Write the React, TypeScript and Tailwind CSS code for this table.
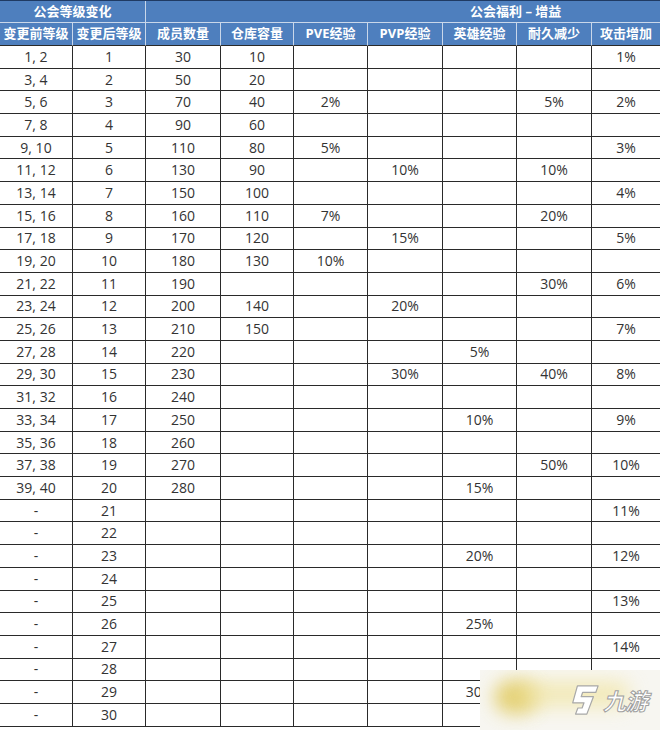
const rows: string[][] = [
  ["1, 2", "1", "30", "10", "", "", "", "", "1%"],
  ["3, 4", "2", "50", "20", "", "", "", "", ""],
  ["5, 6", "3", "70", "40", "2%", "", "", "5%", "2%"],
  ["7, 8", "4", "90", "60", "", "", "", "", ""],
  ["9, 10", "5", "110", "80", "5%", "", "", "", "3%"],
  ["11, 12", "6", "130", "90", "", "10%", "", "10%", ""],
  ["13, 14", "7", "150", "100", "", "", "", "", "4%"],
  ["15, 16", "8", "160", "110", "7%", "", "", "20%", ""],
  ["17, 18", "9", "170", "120", "", "15%", "", "", "5%"],
  ["19, 20", "10", "180", "130", "10%", "", "", "", ""],
  ["21, 22", "11", "190", "", "", "", "", "30%", "6%"],
  ["23, 24", "12", "200", "140", "", "20%", "", "", ""],
  ["25, 26", "13", "210", "150", "", "", "", "", "7%"],
  ["27, 28", "14", "220", "", "", "", "5%", "", ""],
  ["29, 30", "15", "230", "", "", "30%", "", "40%", "8%"],
  ["31, 32", "16", "240", "", "", "", "", "", ""],
  ["33, 34", "17", "250", "", "", "", "10%", "", "9%"],
  ["35, 36", "18", "260", "", "", "", "", "", ""],
  ["37, 38", "19", "270", "", "", "", "", "50%", "10%"],
  ["39, 40", "20", "280", "", "", "", "15%", "", ""],
  ["-", "21", "", "", "", "", "", "", "11%"],
  ["-", "22", "", "", "", "", "", "", ""],
  ["-", "23", "", "", "", "", "20%", "", "12%"],
  ["-", "24", "", "", "", "", "", "", ""],
  ["-", "25", "", "", "", "", "", "", "13%"],
  ["-", "26", "", "", "", "", "25%", "", ""],
  ["-", "27", "", "", "", "", "", "", "14%"],
  ["-", "28", "", "", "", "", "", "", ""],
  ["-", "29", "", "", "", "", "30%", "", ""],
  ["-", "30", "", "", "", "", "", "", ""],
];

const heads = ["变更前等级", "变更后等级", "成员数量", "仓库容量", "PVE经验", "PVP经验", "英雄经验", "耐久减少", "攻击增加"];

const cols = "grid grid-cols-[73px_73px_75px_73px_74px_75px_74px_75px_68px]";

// 九游 watermark sitting over the bottom-right corner
function Watermark() {
  return (
    <div className="absolute bottom-0 right-0 flex h-[60px] w-[180px] items-center gap-[3px] overflow-hidden bg-[#f7f6f1] pl-[88px]">
      <div className="absolute left-[14px] top-[10px] h-[34px] w-[44px] rounded-full bg-[#e0c857] opacity-80 blur-[9px]" />
      <div className="absolute left-[40px] top-[12px] h-[24px] w-[110px] rounded-full bg-[#f0e39a] opacity-70 blur-[10px]" />
      <svg className="relative shrink-0" width="32" height="34" viewBox="0 0 34 36">
        <path
          d="M10 3 L32 3 L29.5 10 L15.5 10 L14 14.5 L27 14.5 L20 33 L8 33 L10.5 26.5 L15 26.5 L17 21 L5 21 Z"
          fill="#ffffff"
          stroke="#a8a8a8"
          strokeWidth="1.3"
          strokeLinejoin="round"
        />
      </svg>
      <span className="relative text-[23px] font-bold italic leading-none tracking-[-1px] text-white [-webkit-text-stroke:1px_#a0a0a0] [font-family:'Noto_Sans_CJK_SC',sans-serif]">
        九游
      </span>
    </div>
  );
}

export default function App() {
  return (
    <div className="relative h-[730px] w-[660px] overflow-hidden bg-white text-[#333] [font-family:'Open_Sans','Noto_Sans_CJK_SC',sans-serif]">
      <div className="flex h-[23px] border-t border-[#1f3a63] bg-[#4e7fbe] text-[13px] font-bold text-white">
        <div className="flex w-[146px] items-center justify-center border-r border-b border-[#c9d7ea]">公会等级变化</div>
        <div className="flex flex-1 items-center border-b border-[#c9d7ea] pl-[324px]">公会福利 – 增益</div>
      </div>
      <div className={`${cols} h-[23px] bg-[#4e7fbe] text-[13px] font-bold text-white`}>
        {heads.map((h, i) => (
          <div
            key={h}
            className={`flex items-center justify-center border-b border-[#2a2a2a] ${i < 8 ? "border-r border-r-[#c9d7ea]" : ""}`}
          >
            {h}
          </div>
        ))}
      </div>
      {rows.map((r, ri) => (
        <div key={ri} className={`${cols} h-[22.7px] text-[14px]`}>
          {r.map((c, ci) => (
            <div
              key={ci}
              className={`flex items-center justify-center border-b border-[#2a2a2a] leading-none ${ci < 8 ? "border-r" : ""}`}
            >
              {c}
            </div>
          ))}
        </div>
      ))}
      <Watermark />
    </div>
  );
}
